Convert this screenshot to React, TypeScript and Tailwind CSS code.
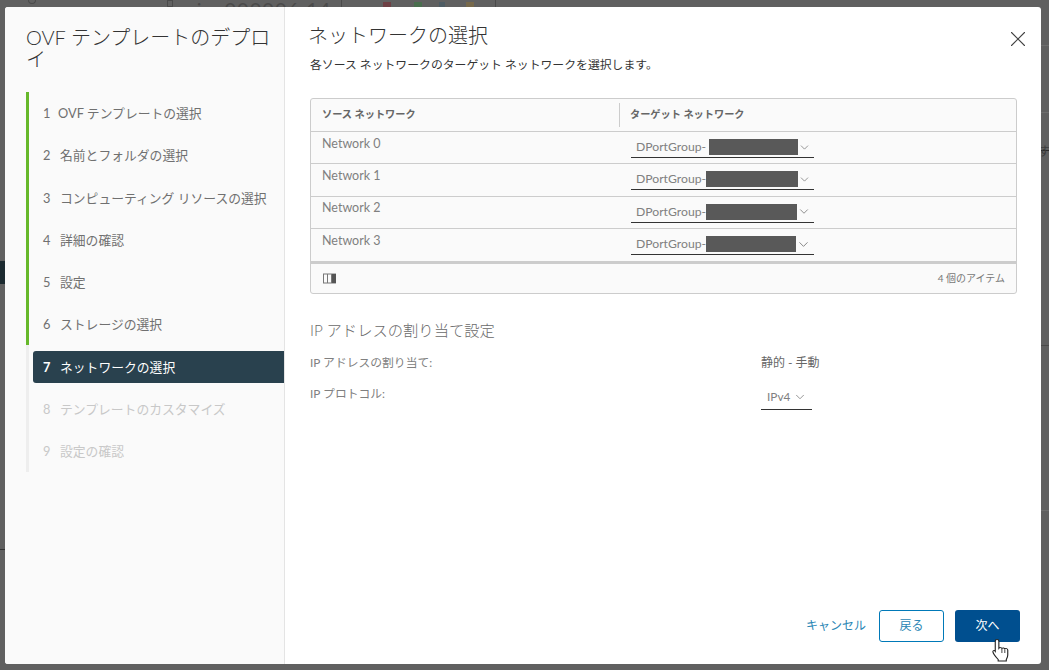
import { ChevronDown, X } from "lucide-react";

const STEPS = [
  { n: 1, label: "OVF テンプレートの選択", state: "done" },
  { n: 2, label: "名前とフォルダの選択", state: "done" },
  { n: 3, label: "コンピューティング リソースの選択", state: "done" },
  { n: 4, label: "詳細の確認", state: "done" },
  { n: 5, label: "設定", state: "done" },
  { n: 6, label: "ストレージの選択", state: "done" },
  { n: 7, label: "ネットワークの選択", state: "active" },
  { n: 8, label: "テンプレートのカスタマイズ", state: "todo" },
  { n: 9, label: "設定の確認", state: "todo" },
];

const NETWORKS = [
  { name: "Network 0", redactWidth: "w-[89px]", redactMargin: "ml-[3px]" },
  { name: "Network 1", redactWidth: "w-[92px]", redactMargin: "ml-0" },
  { name: "Network 2", redactWidth: "w-[91px]", redactMargin: "ml-0" },
  { name: "Network 3", redactWidth: "w-[90px]", redactMargin: "ml-0" },
];

const FONT = "font-['Lato','Noto_Sans_CJK_JP',sans-serif]";

const StepItem = ({ n, label, state }: { n: number; label: string; state: string }) => {
  const colors =
    state === "active"
      ? "bg-[#29414e] text-white rounded-l-[3px]"
      : state === "done"
        ? "text-[#707070]"
        : "text-[#c8c8c8]";
  return (
    <li className={`h-[32px] flex items-center pl-[10px] pt-[1px] text-[12.8px] ${colors}`}>
      <span className={`${n === 1 ? "w-[15px]" : "w-[17px]"} ${state === "active" ? "font-bold" : ""}`}>{n}</span>
      <span>{label}</span>
    </li>
  );
};

const Sidebar = () => (
  <aside className="w-[280px] shrink-0 bg-[#fafafa] border-r border-[#e4e4e4] pl-[21px] pt-[19px]">
    <h1 className="text-[20px] leading-[22px] font-light text-[#333333] pr-[8px]">OVF テンプレートのデプロイ</h1>
    <div className="flex mt-[22px] h-[380px]">
      <div className="w-[3px] flex flex-col">
        <div className="h-[253px] bg-[#66b82a]" />
        <div className="flex-1 bg-[#eeeeee]" />
      </div>
      <ol className="flex-1 ml-[4px] pt-[5px] flex flex-col gap-[10.3px]">
        {STEPS.map((s) => (
          <StepItem key={s.n} {...s} />
        ))}
      </ol>
    </div>
  </aside>
);

const NetworkRow = ({ name, redactWidth, redactMargin }: (typeof NETWORKS)[number]) => (
  <div className="h-[32.4px] flex border-t border-[#cccccc] text-[12.5px] text-[#808080]">
    <div className="w-[308px] pl-[11px] pt-[2.5px]">{name}</div>
    <div className="flex-1 pl-[12px]">
      <div className="w-[183px] h-[26px] flex items-center pl-[5px] pt-[5px] border-b border-[#333333]">
        <span className="w-[70px] shrink-0 text-[12.2px] whitespace-nowrap">DPortGroup-</span>
        <span className={`h-[16px] shrink-0 bg-[#595959] ${redactWidth} ${redactMargin}`} />
        <ChevronDown size={15} strokeWidth={1.4} className="ml-auto mr-[3px] text-[#777777]" />
      </div>
    </div>
  </div>
);

const NetworkTable = () => (
  <div className="mt-[24px] w-[707px] h-[196px] border border-[#cccccc] rounded-[3px] bg-[#fafafa] flex flex-col">
    <div className="h-[32px] flex items-center text-[10.2px] font-bold text-[#666666]">
      <div className="w-[308px] pl-[11px]">ソース ネットワーク</div>
      <div className="h-[24px] border-l border-[#cccccc] pl-[10px] flex items-center">ターゲット ネットワーク</div>
    </div>
    {NETWORKS.map((n) => (
      <NetworkRow key={n.name} {...n} />
    ))}
    <div className="h-[3px] bg-[#cccccc]" />
    <div className="flex-1 flex items-center justify-between pl-[12px] pr-[11px] text-[10px] text-[#777777]">
      <svg width="13" height="11" viewBox="0 0 13 11">
        <rect x="0.5" y="1" width="12" height="9" fill="none" stroke="#777777" />
        <path d="M4.5 1v9M8.5 1v9" stroke="#777777" />
        <rect x="9" y="1" width="4" height="9" fill="#555555" />
      </svg>
      <span>4 個のアイテム</span>
    </div>
  </div>
);

const IpSettings = () => (
  <section className="mt-[27px] text-[#808080]">
    <h2 className="text-[15.3px] leading-[18px] font-light text-[#6a6a6a]">IP アドレスの割り当て設定</h2>
    <div className="flex mt-[15px] text-[11.8px] h-[18px] items-center">
      <span className="w-[451px]">IP アドレスの割り当て:</span>
      <span className="text-[12px] text-[#666666]">静的 - 手動</span>
    </div>
    <div className="flex mt-[12px] text-[11.8px]">
      <span className="w-[451px] h-[18px] pt-[1px] flex items-center">IP プロトコル:</span>
      <div className="w-[51px] h-[25px] flex items-center pl-[6px] border-b border-[#333333] mt-[1px]">
        IPv4
        <ChevronDown size={14} strokeWidth={1.4} className="ml-[3px]" />
      </div>
    </div>
  </section>
);

const HandCursor = () => (
  <svg className="absolute left-[992px] top-[638px]" width="18" height="24" viewBox="0 0 16 24" preserveAspectRatio="none">
    <path
      d="M4.5 1.5c1 0 1.6.7 1.6 1.7v7c.5-.8 2.3-.8 2.7.2.6-.8 2.3-.6 2.6.4.8-.6 2.5-.2 2.6 1.2v5c0 2-.6 3-1.3 4.5v1.5H5.5v-1.5C3.5 19 1.2 16 .8 13.8c-.2-1 1-1.7 1.7-1l.4.6V3.2c0-1 .6-1.7 1.6-1.7z"
      fill="#ffffff"
      stroke="#222222"
      strokeWidth="1"
    />
    <path d="M8.8 11v4M11.4 11.6V15" stroke="#222222" strokeWidth="0.8" />
  </svg>
);

// what shows of the page behind the dimmed overlay
const Backdrop = () => (
  <div className="absolute inset-0">
    <span className="absolute left-[187px] top-[-3px] text-[20px] leading-[24px] tracking-[1px] text-[#4a4a4a]">siva000006 14</span>
    <div className="absolute left-[28px] top-0 w-[8px] h-[4px] rounded-b-full border border-t-0 border-[#4a4a4a]" />
    <div className="absolute left-[167px] top-0 w-[6px] h-[7px] border border-[#4a4a4a]" />
    <div className="absolute left-[341px] top-0 w-px h-[7px] bg-[#4a4a4a]" />
    <div className="absolute left-[495px] top-0 w-px h-[7px] bg-[#4a4a4a]" />
    <div className="absolute left-[383px] top-[2px] w-[8px] h-[5px] bg-[#6e4044]" />
    <div className="absolute left-[414px] top-[2px] w-[8px] h-[5px] bg-[#4a6e4e]" />
    <div className="absolute left-[439px] top-[2px] w-[6px] h-[5px] bg-[#4e5c64]" />
    <div className="absolute left-[466px] top-[2px] w-[8px] h-[5px] bg-[#76684a]" />
    <div className="absolute left-0 top-[261px] w-[5px] h-[23px] bg-[#1c2a30]" />
    <div className="absolute left-0 top-[549px] w-[5px] h-px bg-[#333333]" />
    <div className="absolute right-0 top-[150px] w-[8px] h-px bg-[#2a2a2a]" />
    <span className="absolute right-[-1px] top-[143px] text-[12px] text-[#3c3c3c]">す</span>
    <div className="absolute right-0 top-[45px] w-[8px] h-px bg-[#6e6e6e]" />
    <div className="absolute right-0 top-[112px] w-[8px] h-px bg-[#6e6e6e]" />
    <div className="absolute right-0 top-[345px] w-[8px] h-px bg-[#4a4a4a]" />
    <div className="absolute right-0 top-[510px] w-[8px] h-px bg-[#6e6e6e]" />
  </div>
);

const App = () => (
  <div className={`relative w-[1049px] h-[670px] overflow-hidden bg-[#606060] pt-[7px] pl-[5px] ${FONT}`}>
    <Backdrop />
    <div className="relative w-[1036px] h-[657px] bg-white rounded-[3px] flex overflow-hidden">
      <Sidebar />
      <main className="relative flex-1 pl-[25px] pt-[15px] flex flex-col">
        <h2 className="-ml-[2px] text-[20px] leading-[26px] font-light text-[#333333]">ネットワークの選択</h2>
        <p className="mt-[8px] text-[11.85px] leading-[18px] text-[#333333]">各ソース ネットワークのターゲット ネットワークを選択します。</p>
        <NetworkTable />
        <IpSettings />
        <div className="mt-auto mb-[22px] pr-[21px] flex items-center justify-end text-[12px]">
          <span className="text-[#2a86b5] mr-[13px]">キャンセル</span>
          <button className="w-[65px] h-[32px] rounded-[3px] border border-[#0079b8] text-[#2a86b5] mr-[11px]">戻る</button>
          <button className="w-[65px] h-[32px] rounded-[3px] bg-[#004f8f] text-white">次へ</button>
        </div>
        <X size={26} strokeWidth={1} className="absolute right-[10px] top-[19px] text-[#444444]" />
      </main>
    </div>
    <HandCursor />
  </div>
);

export default App;
